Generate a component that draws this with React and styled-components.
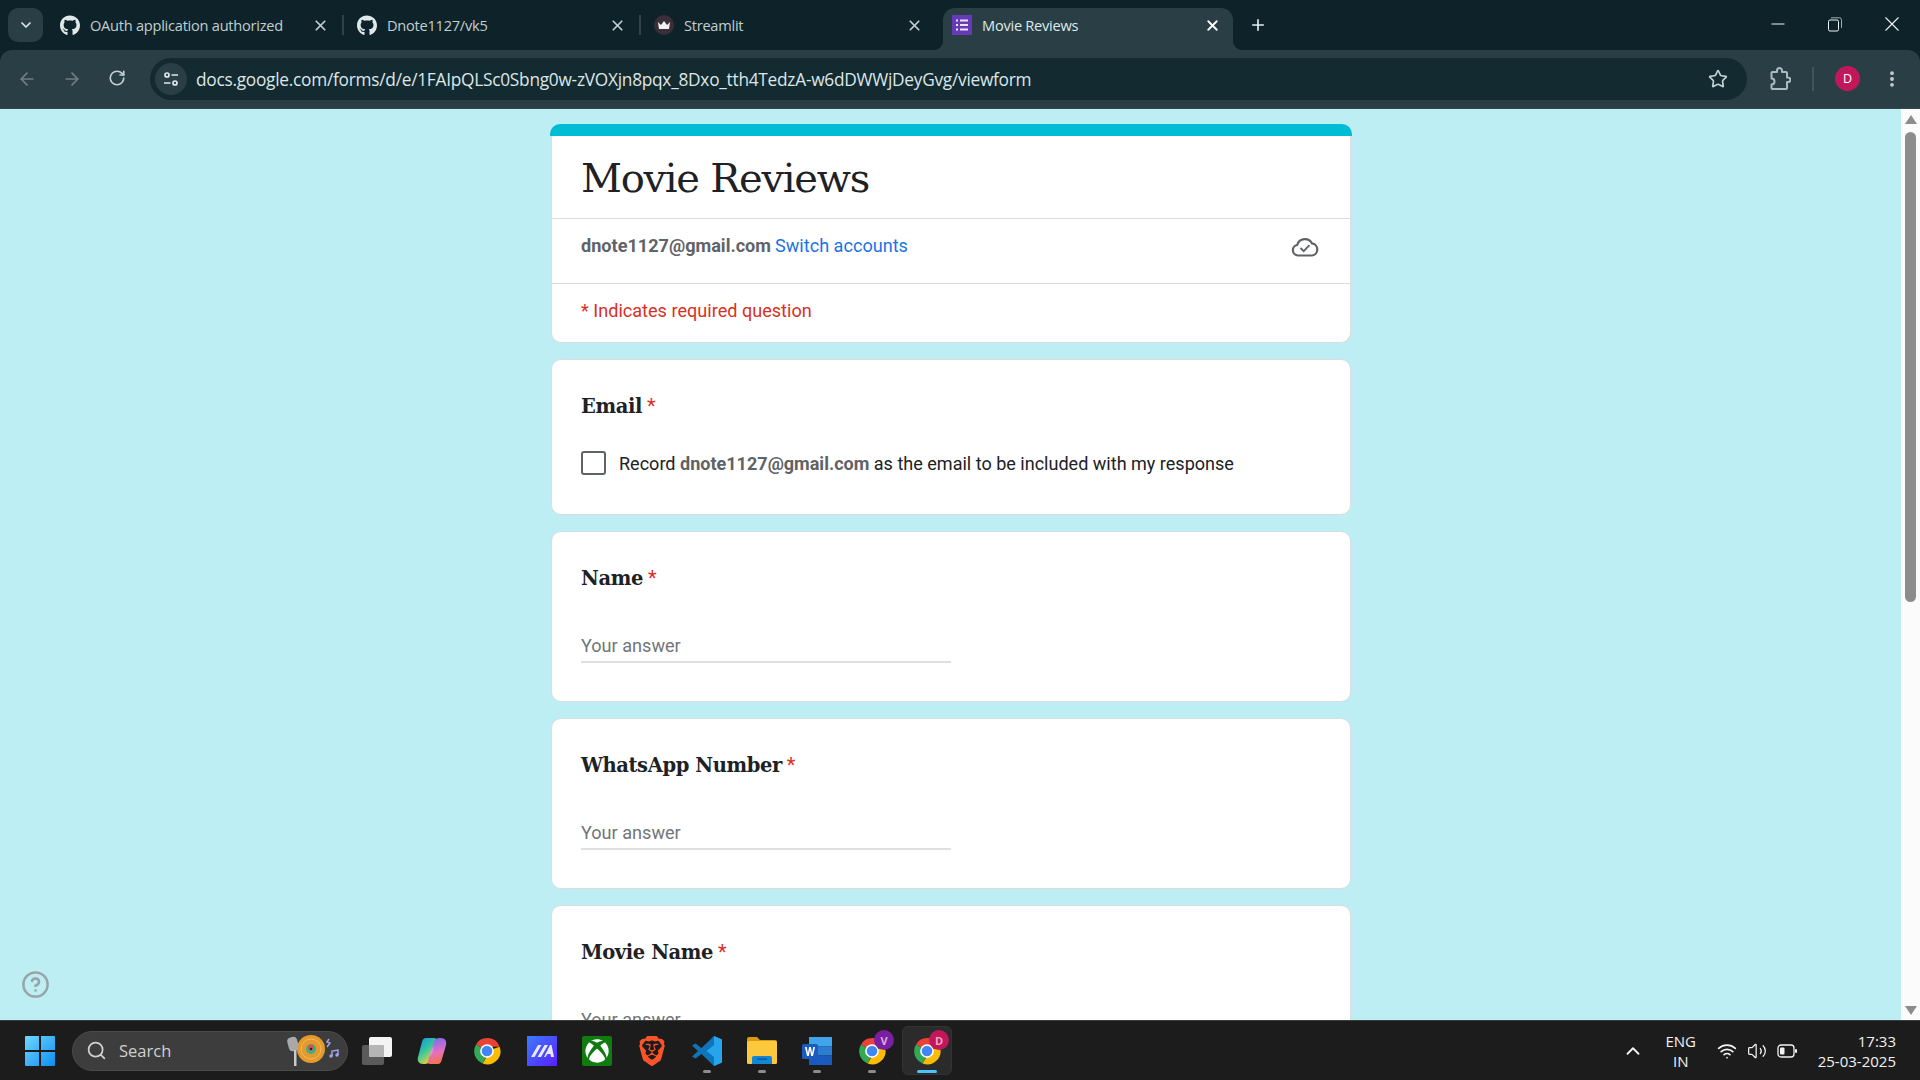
import styled, { createGlobalStyle } from "styled-components";
import { FaGithub, FaXbox } from "react-icons/fa";
import { SiBrave } from "react-icons/si";
import {
  ArrowLeft,
  ArrowRight,
  ChevronDown,
  ChevronUp,
  MoreVertical,
  Plus,
  RotateCw,
  Search,
  Star,
  Volume2,
  Wifi,
  X,
  CircleHelp,
} from "lucide-react";

const GlobalStyle = createGlobalStyle`
  html, body { margin: 0; padding: 0; height: 100%; overflow: hidden; }
  body { font-family: Roboto, "Liberation Sans", sans-serif; background: #0d2329; }
  * { box-sizing: border-box; }
`;

const Screen = styled.div`
  width: 1920px;
  height: 1080px;
  display: flex;
  flex-direction: column;
  overflow: hidden;
  background: #0d2329;
`;

const TabStrip = styled.div`
  height: 50px;
  display: flex;
  align-items: flex-end;
  padding-left: 8px;
  background: #0d2329;
`;

const TabToggle = styled.div`
  width: 35px;
  height: 34px;
  margin: 0 4px 8px 0;
  border-radius: 10px;
  background: #293f45;
  color: #dfe8ea;
  display: flex;
  align-items: center;
  justify-content: center;
`;

const Tab = styled.div`
  position: relative;
  height: 42px;
  width: ${(p) => (p.$active ? "290px" : "297px")};
  margin: ${(p) => (p.$active ? "0 5px" : "0")};
  padding: ${(p) => (p.$active ? "0 12px 8px 9px" : "0 15px 8px 13px")};
  display: flex;
  align-items: center;
  gap: 10px;
  font: 14.6px "Open Sans", "Noto Sans", sans-serif;
  letter-spacing: -0.25px;
  color: ${(p) => (p.$active ? "#dfe8ea" : "#c1ced1")};
  background: ${(p) => (p.$active ? "#293f45" : "transparent")};
  border-radius: 12px 12px 0 0;
  ${(p) =>
    p.$sep &&
    `&::after {
      content: "";
      position: absolute;
      right: 0;
      top: 7px;
      height: 20px;
      width: 2px;
      background: #2f444a;
    }`}
  ${(p) =>
    p.$active &&
    `&::before, &::after {
      content: "";
      position: absolute;
      bottom: 0;
      width: 10px;
      height: 10px;
    }
    &::before { left: -10px; background: radial-gradient(circle at 0 0, transparent 10px, #293f45 10.5px); }
    &::after { right: -10px; background: radial-gradient(circle at 100% 0, transparent 10px, #293f45 10.5px); }`}
`;

const TabTitle = styled.span`
  flex: 1;
  white-space: nowrap;
  margin-top: -1px;
`;

const TabIcon = styled.span`
  width: 20px;
  height: 20px;
  flex: none;
  display: flex;
  align-items: center;
  justify-content: center;
  color: #dfe8ea;
`;

const NewTab = styled.div`
  margin: 0 0 8px 3px;
  height: 34px;
  width: 34px;
  display: flex;
  align-items: center;
  justify-content: center;
  color: #e4ecee;
`;

const WindowControls = styled.div`
  margin-left: auto;
  display: flex;
  align-self: flex-start;
  height: 48px;
  color: #f0f4f5;
`;

const WindowButton = styled.div`
  width: 57px;
  height: 48px;
  display: flex;
  align-items: center;
  justify-content: center;
`;

const Toolbar = styled.div`
  height: 59px;
  display: flex;
  align-items: center;
  padding: 0 0 1px 0;
  background: #293f45;
  border-radius: 12px 12px 0 0;
  border-bottom: 1px solid #324a50;
`;

const NavButton = styled.div`
  width: 45px;
  flex: none;
  display: flex;
  justify-content: center;
  color: ${(p) => (p.$on ? "#c3d0d3" : "#6d8084")};
`;

const NavGroup = styled.div`
  display: flex;
  padding-left: 4px;
  width: 150px;
  flex: none;
`;

const Omnibox = styled.div`
  width: 1597px;
  height: 42px;
  flex: none;
  border-radius: 21px;
  background: #122a30;
  display: flex;
  align-items: center;
  padding: 0 19px 0 5px;
`;

const SiteInfo = styled.div`
  width: 32px;
  height: 32px;
  border-radius: 50%;
  background: #293f45;
  flex: none;
  display: flex;
  align-items: center;
  justify-content: center;
  margin-right: 9px;
`;

const Url = styled.div`
  flex: 1;
  font: 17.3px "Open Sans", "Noto Sans", sans-serif;
  letter-spacing: -0.26px;
  color: #dde6e8;
  white-space: nowrap;
  margin-top: 2px;
`;

const ToolbarRight = styled.div`
  flex: 1;
  display: flex;
  align-items: center;
  color: #a9bbbf;
`;

const Puzzlebox = styled.div`
  margin-left: 22px;
  display: flex;
`;

const ToolSep = styled.div`
  width: 2px;
  height: 24px;
  background: #3e555b;
  margin: 0 21px 0 21px;
`;

const Avatar = styled.div`
  width: 25px;
  height: 25px;
  border-radius: 50%;
  background: #c2185b;
  color: #fff;
  font: 12.5px "Open Sans", sans-serif;
  display: flex;
  align-items: center;
  justify-content: center;
`;

const Dots = styled.div`
  margin-left: 22px;
  display: flex;
  color: #c3d0d3;
`;

const Viewport = styled.div`
  position: relative;
  flex: 1;
  min-height: 0;
  display: flex;
  overflow: hidden;
  background: #bdeef4;
`;

const Page = styled.main`
  flex: 1;
  padding: 15px 0 0 551px;
  display: flex;
  flex-direction: column;
  gap: 16px;
`;

const Card = styled.section`
  width: 800px;
  flex: none;
  background: #fff;
  border: 1px solid #dadce0;
  border-radius: 10px;
  height: ${(p) => p.$h}px;
  padding: 0 29px;
`;

const HeaderCard = styled.section`
  width: 800px;
  flex: none;
  background: #fff;
  border: 1px solid #dadce0;
  border-top: none;
  border-radius: 10px;
`;

const Accent = styled.div`
  height: 12px;
  margin: 0 -2px;
  border-radius: 10px 10px 0 0;
  background: #00bcd4;
`;

const FormTitle = styled.h1`
  margin: 0;
  height: 83px;
  padding: 19px 29px 0;
  font: 400 40px "DejaVu Serif", serif;
  letter-spacing: -1.27px;
  color: #202124;
  border-bottom: 1px solid #dadce0;
`;

const AccountRow = styled.div`
  height: 65px;
  padding: 16px 29px 0;
  font-size: 18.1px;
  color: #5f6368;
  border-bottom: 1px solid #dadce0;
  display: flex;
  gap: 4px;
`;

const Bold = styled.b`
  font-weight: 700;
  color: #5f6368;
`;

const SwitchLink = styled.span`
  color: #1a73e8;
`;

const CloudSlot = styled.span`
  margin-left: auto;
  margin-right: 2px;
  margin-top: -1px;
  color: #5f6368;
`;

const RequiredNote = styled.div`
  height: 58px;
  padding: 16px 29px 0;
  font-size: 18.1px;
  color: #d93025;
`;

const QuestionTitle = styled.div`
  padding-top: 34px;
  font: 700 19.5px "DejaVu Serif", serif;
  letter-spacing: -0.4px;
  color: #202124;
  line-height: 24px;
`;

const Asterisk = styled.span`
  font: 400 20px Roboto, sans-serif;
  color: #d93025;
  margin-left: 5px;
`;

const CheckRow = styled.div`
  display: flex;
  align-items: center;
  gap: 13px;
  margin-top: 32px;
  font-size: 18.05px;
  color: #202124;
`;

const Checkbox = styled.div`
  width: 25px;
  height: 24px;
  border: 2px solid #5f6368;
  border-radius: 3px;
  flex: none;
`;

const Answer = styled.div`
  margin-top: 44px;
  width: 370px;
  height: 28px;
  font-size: 18.1px;
  color: #70757a;
  border-bottom: 2px solid #e0e0e0;
`;

const HelpButton = styled.div`
  position: absolute;
  left: 21px;
  bottom: 21px;
  color: #98a5a8;
  display: flex;
`;

const Scrollbar = styled.div`
  width: 19px;
  flex: none;
  background: #fbfbfb;
  display: flex;
  flex-direction: column;
  align-items: center;
  padding-top: 6px;
`;

const ScrollArrow = styled.div`
  width: 0;
  height: 0;
  border-left: 6.5px solid transparent;
  border-right: 6.5px solid transparent;
  ${(p) => (p.$down ? "border-top" : "border-bottom")}: 9px solid #8c8c8c;
  ${(p) => p.$down && "margin-top: auto; margin-bottom: 5px;"}
`;

const ScrollThumb = styled.div`
  width: 11px;
  height: 470px;
  margin-top: 8px;
  border-radius: 5.5px;
  background: #8c8c8c;
`;

const Taskbar = styled.footer`
  height: 60px;
  flex: none;
  display: flex;
  align-items: center;
  background: #1c1c1c;
  border-top: 1px solid #3a3d3e;
  padding-left: 12px;
  color: #f2f2f2;
`;

const TaskItem = styled.div`
  position: relative;
  width: 50px;
  height: 49px;
  margin: 0 2.5px;
  flex: none;
  display: flex;
  align-items: center;
  justify-content: center;
  border-radius: 6px;
  background: ${(p) => (p.$active ? "#2b2b2b" : "transparent")};
  border: 1px solid ${(p) => (p.$active ? "#333" : "transparent")};
  &::after {
    content: "";
    position: absolute;
    bottom: 1px;
    left: 50%;
    height: 3px;
    border-radius: 2px;
    transform: translateX(-50%);
    width: ${(p) => (p.$active ? "20px" : p.$open ? "8px" : "0")};
    background: ${(p) => (p.$active ? "#4cc2ff" : "#8c8c8c")};
  }
`;

const XboxTile = styled.div`
  width: 30px;
  height: 30px;
  border-radius: 2px;
  background: #107c10;
  color: #fff;
  display: flex;
  align-items: center;
  justify-content: center;
`;

const SearchBox = styled.div`
  width: 276px;
  height: 40px;
  margin: 0 1.5px 0 5px;
  flex: none;
  border-radius: 20px;
  background: #3d3d3d;
  border: 1px solid #4a4a4a;
  display: flex;
  align-items: center;
  gap: 12px;
  padding-left: 13px;
  font: 16.5px "Open Sans", sans-serif;
  color: #d0d0d0;
`;

const SearchArt = styled.span`
  margin-left: auto;
  margin-right: 6px;
  display: flex;
`;

const Badge = styled.span`
  position: absolute;
  top: 3px;
  right: 2px;
  width: 20px;
  height: 20px;
  border-radius: 50%;
  background: ${(p) => p.$bg};
  color: ${(p) => p.$fg};
  font: 700 11px "Open Sans", sans-serif;
  display: flex;
  align-items: center;
  justify-content: center;
`;

const Tray = styled.div`
  margin-left: auto;
  display: flex;
  align-items: center;
  height: 100%;
  padding-right: 24px;
`;

const TrayIcon = styled.span`
  display: flex;
  width: ${(p) => p.$w}px;
  justify-content: center;
`;

const Lang = styled.div`
  width: 56px;
  text-align: center;
  font: 15px/20px "Open Sans", sans-serif;
  margin: 0 3px 0 6px;
`;

const Clock = styled.div`
  margin-left: 16px;
  text-align: right;
  font: 15px/20px "Open Sans", sans-serif;
  white-space: nowrap;
`;

function StreamlitIcon() {
  return (
    <svg width="20" height="20" viewBox="0 0 20 20">
      <circle cx="10" cy="10" r="10" fill="#3a2f36" />
      <path d="M4 7l3 3 3-4 3 4 3-3-1 7H5z" fill="#f2f2f2" />
    </svg>
  );
}

function FormsIcon() {
  return (
    <svg width="20" height="20" viewBox="0 0 20 20">
      <rect width="20" height="20" fill="#673ab7" />
      <path d="M4 4.500h2v2H4zM8 4.500h8v2H8zM4 9h2v2H4zM8 9h8v2H8zM4 13.500h2v2H4zM8 13.500h8v2H8z" fill="#ece3f7" />
    </svg>
  );
}

function SiteInfoIcon() {
  return (
    <svg width="16" height="16" viewBox="0 0 16 16" fill="none" stroke="#dfe8ea" strokeWidth="1.7">
      <circle cx="4" cy="4" r="2" />
      <path d="M8.500 4H15M1 12h6.500" />
      <circle cx="12" cy="12" r="2" />
    </svg>
  );
}

function MinimizeGlyph() {
  return (
    <svg width="14" height="14" viewBox="0 0 14 14" stroke="currentColor" strokeWidth="1">
      <path d="M0.500 7h13" />
    </svg>
  );
}

function RestoreGlyph() {
  return (
    <svg width="14" height="15" viewBox="0 0 14 15" fill="none" stroke="currentColor" strokeWidth="1">
      <rect x="0.500" y="3" width="10" height="11" rx="1.500" />
      <path d="M3 0.800h8.500a2 2 0 0 1 2 2v8" stroke="#9fb0b3" />
    </svg>
  );
}

function CloseGlyph() {
  return (
    <svg width="14" height="14" viewBox="0 0 14 14" stroke="currentColor" strokeWidth="1.100">
      <path d="M0.500 0.500l13 13M13.500 0.500l-13 13" />
    </svg>
  );
}

function ExtensionIcon() {
  return (
    <svg width="22" height="24" viewBox="0 0 22 24" fill="none" stroke="currentColor" strokeWidth="2" strokeLinejoin="round">
      <path d="M3 5h5V3.500a2.500 2.500 0 0 1 5 0V5h4a1 1 0 0 1 1 1v4.500h1a2.300 2.300 0 0 1 0 4.600h-1V21a1 1 0 0 1-1 1H3.500a1 1 0 0 1-1-1v-3.500a3 3 0 0 0 0-6V6a1 1 0 0 1 .5-1z" />
    </svg>
  );
}

function CloudCheck() {
  return (
    <svg width="28" height="24" viewBox="0 0 28 24" fill="none" stroke="currentColor" strokeWidth="2.200">
      <path d="M7 21.500a5.300 5.300 0 0 1-.8-10.500A8 8 0 0 1 21 9.400a6.100 6.100 0 0 1 0 12.100z" strokeLinejoin="round" />
      <path d="M9.500 14l3.200 3.200 5.800-6" strokeWidth="1.800" />
    </svg>
  );
}

function WindowsLogo() {
  return (
    <svg width="30" height="30" viewBox="0 0 30 30">
      <defs>
        <linearGradient id="win" x1="0" y1="0" x2="1" y2="1">
          <stop offset="0" stopColor="#6fd8ff" />
          <stop offset="1" stopColor="#0f8cf0" />
        </linearGradient>
      </defs>
      <path d="M0 1a1 1 0 0 1 1-1h13v14H0zM16 0h13a1 1 0 0 1 1 1v13H16zM0 16h14v14H1a1 1 0 0 1-1-1zM16 16h14v13a1 1 0 0 1-1 1H16z" fill="url(#win)" />
    </svg>
  );
}

function DiscArt() {
  return (
    <svg width="56" height="32" viewBox="0 0 56 32">
      <rect x="3" y="2" width="10" height="14" rx="4" transform="rotate(-15 8 9)" fill="#a9a9a9" />
      <rect x="9" y="15" width="2.500" height="16" fill="#c9c9c9" />
      <circle cx="26" cy="14" r="14" fill="#e49a2c" />
      <circle cx="26" cy="14" r="10" fill="none" stroke="#f2b95a" strokeWidth="1" />
      <circle cx="26" cy="14" r="5" fill="#3bae8d" />
      <circle cx="26" cy="12.500" r="3" fill="#d8504b" />
      <circle cx="26" cy="14" r="1.200" fill="#222" />
      <path d="M44 4l-2 3 3 1-3 4" fill="none" stroke="#a5a4f0" strokeWidth="1.400" />
      <path d="M47 21v-5l6-1v5" fill="none" stroke="#a5a4f0" strokeWidth="1.400" />
      <circle cx="46" cy="21" r="1.700" fill="#a5a4f0" />
      <circle cx="52" cy="20" r="1.700" fill="#a5a4f0" />
    </svg>
  );
}

function TaskViewIcon() {
  return (
    <svg width="30" height="28" viewBox="0 0 30 28">
      <rect x="0" y="8" width="22" height="20" rx="2" fill="#5a5a5a" />
      <rect x="7" y="0" width="23" height="20" rx="2" fill="#f4f4f4" />
      <rect x="7" y="8" width="15" height="12" rx="1" fill="#b5b5b5" />
    </svg>
  );
}

function CopilotIcon() {
  return (
    <svg width="30" height="28" viewBox="0 0 30 28">
      <defs>
        <linearGradient id="cpa" x1="0" y1="0" x2="0.600" y2="1">
          <stop offset="0" stopColor="#1f8df0" />
          <stop offset="0.5" stopColor="#2fc6a0" />
          <stop offset="1" stopColor="#f4d23b" />
        </linearGradient>
        <linearGradient id="cpb" x1="0.400" y1="0" x2="0.600" y2="1">
          <stop offset="0" stopColor="#7a6cf0" />
          <stop offset="0.55" stopColor="#e66fc0" />
          <stop offset="1" stopColor="#f6743e" />
        </linearGradient>
      </defs>
      <path d="M9 1h8c2 0 3 1 2 3l-6 19c-1 3-3 4-5 4H6C2 27 0 24 1 20L5 5c.6-2.500 2-4 4-4z" fill="url(#cpa)" />
      <path d="M21 27h-8c-2 0-3-1-2-3l6-19c1-3 3-4 5-4h2c4 0 6 3 5 7l-4 14c-.6 3-2 5-4 5z" fill="url(#cpb)" />
      <path d="M13.500 15l3-6c.5 2-.5 7-3 10z" fill="#fff" opacity="0.250" />
    </svg>
  );
}

function ChromeIcon({ size = 30 }) {
  return (
    <svg width={size} height={size} viewBox="0 0 48 48">
      <path d="M24 24L6.500 13.500A21 21 0 0 1 44.200 17H24z" fill="#ea4335" />
      <path d="M6.500 13.500A21 21 0 0 0 17 44l8-16-1-4z" fill="#34a853" />
      <path d="M44.200 17A21 21 0 0 1 17 44l10-17 -3-3z" fill="#fbbc04" />
      <circle cx="24" cy="24" r="11" fill="#fff" />
      <circle cx="24" cy="24" r="8.500" fill="#4285f4" />
    </svg>
  );
}

function AppLogo() {
  return (
    <svg width="30" height="30" viewBox="0 0 30 30">
      <defs>
        <linearGradient id="mm" x1="0" y1="0" x2="1" y2="1">
          <stop offset="0" stopColor="#3b7cff" />
          <stop offset="1" stopColor="#5a1eff" />
        </linearGradient>
      </defs>
      <rect width="30" height="30" fill="url(#mm)" />
      <path d="M4 21l7-12h3.500l-7 12zM10.500 21l7-12h3.500l-7 12zM17 21l6-12h1.500L27 21h-3l-.6-3h-3L18.500 21z" fill="#e8e8ff" />
    </svg>
  );
}

function VsCodeIcon() {
  return (
    <svg width="30" height="30" viewBox="0 0 30 30">
      <path d="M22 0l8 3.500v23L22 30 9.500 18l-6 4.500L0 20.500 6 15 0 9.500l3.500-2 6 4.500z" fill="#0e75b8" />
      <path d="M22 0l8 3.500v23L22 30V21l-7.500-6L22 9z" fill="#27a4ee" />
    </svg>
  );
}

function FolderIcon() {
  return (
    <svg width="30" height="27" viewBox="0 0 30 27">
      <path d="M0 2a2 2 0 0 1 2-2h8l3 3h15a2 2 0 0 1 2 2v4H0z" fill="#d99b0c" />
      <rect y="4" width="30" height="23" rx="1.500" fill="#fcc83e" />
      <path d="M5 27v-6a2 2 0 0 1 2-2h16a2 2 0 0 1 2 2v6z" fill="#1486d6" />
      <rect x="10" y="21.500" width="10" height="1.200" fill="#0b4f85" />
    </svg>
  );
}

function WordIcon() {
  return (
    <svg width="30" height="28" viewBox="0 0 30 28">
      <rect x="7" width="23" height="9.500" fill="#41a5ee" />
      <rect x="7" y="9.500" width="23" height="9" fill="#2b7cd3" />
      <rect x="7" y="18.500" width="23" height="9.500" fill="#185abd" />
      <rect y="7" width="16" height="15" rx="1.500" fill="#1a5cc0" />
      <path d="M3 10l2 9h1.800L8 13l1.200 6H11l2-9h-1.700l-1.200 6-1.200-6H7.100l-1.200 6-1.200-6z" fill="#fff" />
    </svg>
  );
}

function BatteryIcon() {
  return (
    <svg width="20" height="14" viewBox="0 0 20 14" fill="none">
      <rect x="1" y="1" width="16" height="12" rx="3" stroke="currentColor" strokeWidth="1.300" />
      <rect x="3" y="3.500" width="4.500" height="7" rx="1" fill="currentColor" />
      <rect x="18" y="5" width="2" height="4" rx="1" fill="currentColor" />
    </svg>
  );
}

function App() {
  return (
    <Screen>
      <GlobalStyle />
      <TabStrip>
        <TabToggle>
          <ChevronDown size={16} strokeWidth={2.5} />
        </TabToggle>
        <Tab $sep>
          <TabIcon>
            <FaGithub size={21} />
          </TabIcon>
          <TabTitle>OAuth application authorized</TabTitle>
          <X size={17} strokeWidth={2.4} />
        </Tab>
        <Tab $sep>
          <TabIcon>
            <FaGithub size={21} />
          </TabIcon>
          <TabTitle>Dnote1127/vk5</TabTitle>
          <X size={17} strokeWidth={2.4} />
        </Tab>
        <Tab>
          <TabIcon>
            <StreamlitIcon />
          </TabIcon>
          <TabTitle>Streamlit</TabTitle>
          <X size={17} strokeWidth={2.4} />
        </Tab>
        <Tab $active>
          <TabIcon>
            <FormsIcon />
          </TabIcon>
          <TabTitle>Movie Reviews</TabTitle>
          <X size={17} strokeWidth={2.6} color="#fff" />
        </Tab>
        <NewTab>
          <Plus size={18} strokeWidth={2.2} />
        </NewTab>
        <WindowControls>
          <WindowButton>
            <MinimizeGlyph />
          </WindowButton>
          <WindowButton>
            <RestoreGlyph />
          </WindowButton>
          <WindowButton>
            <CloseGlyph />
          </WindowButton>
        </WindowControls>
      </TabStrip>

      <Toolbar>
        <NavGroup>
          <NavButton>
            <ArrowLeft size={20} />
          </NavButton>
          <NavButton>
            <ArrowRight size={20} />
          </NavButton>
          <NavButton $on>
            <RotateCw size={18} strokeWidth={2.2} />
          </NavButton>
        </NavGroup>
        <Omnibox>
          <SiteInfo>
            <SiteInfoIcon />
          </SiteInfo>
          <Url>docs.google.com/forms/d/e/1FAIpQLSc0Sbng0w-zVOXjn8pqx_8Dxo_tth4TedzA-w6dDWWjDeyGvg/viewform</Url>
          <Star size={20} color="#c3d0d3" strokeWidth={2} />
        </Omnibox>
        <ToolbarRight>
          <Puzzlebox>
            <ExtensionIcon />
          </Puzzlebox>
          <ToolSep />
          <Avatar>D</Avatar>
          <Dots>
            <MoreVertical size={20} strokeWidth={2.6} />
          </Dots>
        </ToolbarRight>
      </Toolbar>

      <Viewport>
        <Page>
          <HeaderCard>
            <Accent />
            <FormTitle>Movie Reviews</FormTitle>
            <AccountRow>
              <Bold>dnote1127@gmail.com</Bold>
              <SwitchLink>Switch accounts</SwitchLink>
              <CloudSlot>
                <CloudCheck />
              </CloudSlot>
            </AccountRow>
            <RequiredNote>* Indicates required question</RequiredNote>
          </HeaderCard>

          <Card $h={156}>
            <QuestionTitle>
              Email<Asterisk>*</Asterisk>
            </QuestionTitle>
            <CheckRow>
              <Checkbox />
              <span>
                Record <Bold>dnote1127@gmail.com</Bold> as the email to be included with my response
              </span>
            </CheckRow>
          </Card>

          <Card $h={171}>
            <QuestionTitle>
              Name<Asterisk>*</Asterisk>
            </QuestionTitle>
            <Answer>Your answer</Answer>
          </Card>

          <Card $h={171}>
            <QuestionTitle>
              WhatsApp Number<Asterisk>*</Asterisk>
            </QuestionTitle>
            <Answer>Your answer</Answer>
          </Card>

          <Card $h={171}>
            <QuestionTitle>
              Movie Name<Asterisk>*</Asterisk>
            </QuestionTitle>
            <Answer>Your answer</Answer>
          </Card>
        </Page>

        <HelpButton>
          <CircleHelp size={29} strokeWidth={2.1} />
        </HelpButton>

        <Scrollbar>
          <ScrollArrow />
          <ScrollThumb />
          <ScrollArrow $down />
        </Scrollbar>
      </Viewport>

      <Taskbar>
        <TaskItem>
          <WindowsLogo />
        </TaskItem>
        <SearchBox>
          <Search size={21} strokeWidth={2} />
          Search
          <SearchArt>
            <DiscArt />
          </SearchArt>
        </SearchBox>
        <TaskItem>
          <TaskViewIcon />
        </TaskItem>
        <TaskItem>
          <CopilotIcon />
        </TaskItem>
        <TaskItem>
          <ChromeIcon />
        </TaskItem>
        <TaskItem>
          <AppLogo />
        </TaskItem>
        <TaskItem>
          <XboxTile>
            <FaXbox size={24} />
          </XboxTile>
        </TaskItem>
        <TaskItem>
          <SiBrave size={30} color="#fb542b" />
        </TaskItem>
        <TaskItem $open>
          <VsCodeIcon />
        </TaskItem>
        <TaskItem $open>
          <FolderIcon />
        </TaskItem>
        <TaskItem $open>
          <WordIcon />
        </TaskItem>
        <TaskItem $open>
          <ChromeIcon />
          <Badge $bg="#7b1fa2" $fg="#d9a9ea">V</Badge>
        </TaskItem>
        <TaskItem $active>
          <ChromeIcon />
          <Badge $bg="#c2185b" $fg="#f3a6c6">D</Badge>
        </TaskItem>

        <Tray>
          <TrayIcon $w={28}>
            <ChevronUp size={22} strokeWidth={2} />
          </TrayIcon>
          <Lang>
            ENG
            <br />
            IN
          </Lang>
          <TrayIcon $w={30}>
            <Wifi size={20} />
          </TrayIcon>
          <TrayIcon $w={30}>
            <Volume2 size={20} strokeWidth={1.5} />
          </TrayIcon>
          <TrayIcon $w={30}>
            <BatteryIcon />
          </TrayIcon>
          <Clock>
            17:33
            <br />
            25-03-2025
          </Clock>
        </Tray>
      </Taskbar>
    </Screen>
  );
}

export default App;
